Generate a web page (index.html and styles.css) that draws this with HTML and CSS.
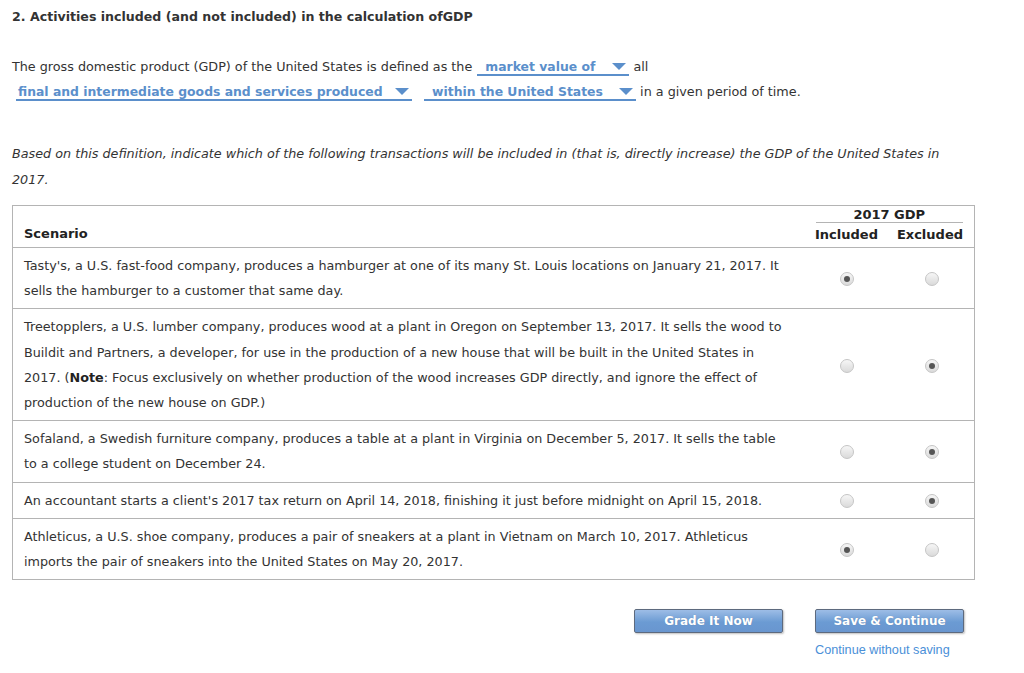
FILE: index.html
```html
<!DOCTYPE html>
<html>
<head>
<meta charset="utf-8">
<link rel="stylesheet" href="styles.css">
</head>
<body>
<div class="page">
  <h2 class="title">2. Activities included (and not included) in the calculation ofGDP</h2>

  <p class="def">The gross domestic product (GDP) of the United States is defined as the <span class="dd dd-1">market value of<span class="tri"></span></span> all<br><span class="dd dd-2">final and intermediate goods and services produced<span class="tri"></span></span> <span class="dd dd-3">within the United States<span class="tri"></span></span> in a given period of time.</p>

  <p class="instr">Based on this definition, indicate which of the following transactions will be included in (that is, directly increase) the GDP of the United States in 2017.</p>

  <table class="grid">
    <colgroup>
      <col class="c-sc">
      <col class="c-inc">
      <col class="c-exc">
    </colgroup>
    <thead>
      <tr>
        <th class="sc-h" rowspan="2">Scenario</th>
        <th class="grp" colspan="2"><span class="grp-label">2017 GDP</span></th>
      </tr>
      <tr>
        <th class="opt-h inc">Included</th>
        <th class="opt-h exc">Excluded</th>
      </tr>
    </thead>
    <tbody>
      <tr>
        <td class="sc">Tasty's, a U.S. fast-food company, produces a hamburger at one of its many St. Louis locations on January 21, 2017. It sells the hamburger to a customer that same day.</td>
        <td class="opt"><span class="radio on"></span></td>
        <td class="opt"><span class="radio"></span></td>
      </tr>
      <tr>
        <td class="sc">Treetopplers, a U.S. lumber company, produces wood at a plant in Oregon on September 13, 2017. It sells the wood to Buildit and Partners, a developer, for use in the production of a new house that will be built in the United States in 2017. (<b class="note">Note</b>: Focus exclusively on whether production of the wood increases GDP directly, and ignore the effect of production of the new house on GDP.)</td>
        <td class="opt"><span class="radio"></span></td>
        <td class="opt"><span class="radio on"></span></td>
      </tr>
      <tr>
        <td class="sc">Sofaland, a Swedish furniture company, produces a table at a plant in Virginia on December 5, 2017. It sells the table to a college student on December 24.</td>
        <td class="opt"><span class="radio"></span></td>
        <td class="opt"><span class="radio on"></span></td>
      </tr>
      <tr>
        <td class="sc">An accountant starts a client's 2017 tax return on April 14, 2018, finishing it just before midnight on April 15, 2018.</td>
        <td class="opt"><span class="radio"></span></td>
        <td class="opt"><span class="radio on"></span></td>
      </tr>
      <tr>
        <td class="sc">Athleticus, a U.S. shoe company, produces a pair of sneakers at a plant in Vietnam on March 10, 2017. Athleticus imports the pair of sneakers into the United States on May 20, 2017.</td>
        <td class="opt"><span class="radio on"></span></td>
        <td class="opt"><span class="radio"></span></td>
      </tr>
    </tbody>
  </table>

  <div class="actions">
    <button class="btn">Grade It Now</button>
    <div class="save-col">
      <button class="btn">Save &amp; Continue</button>
      <a class="skip" href="#">Continue without saving</a>
    </div>
  </div>
</div>
</body>
</html>
```

FILE: styles.css
```css
html, body {
  margin: 0;
  padding: 0;
  background: #fff;
}

body {
  font-family: "DejaVu Sans", Verdana, sans-serif;
  font-size: 12.75px;
  color: #333;
}

.page {
  padding: 9px 0 0 12px;
  width: 963px;
}

.title {
  margin: 0;
  font-size: 12.6px;
  line-height: 16px;
  font-weight: bold;
  color: #333;
}

.def {
  margin: 29px 0 0 0;
  line-height: 25px;
}

.dd {
  display: inline-block;
  position: relative;
  color: #5b8fcb;
  font-weight: bold;
  font-size: 12.4px;
  border-bottom: 2px solid #5b8fcb;
  line-height: 15px;
  padding: 0 0 0 8px;
  box-sizing: border-box;
  text-align: left;
  vertical-align: baseline;
}

.dd-1 { width: 152px; margin-left: 1px; }
.dd-2 { width: 396px; margin-left: 4px; padding-left: 2px; }
.dd-3 { width: 212px; margin-left: 8px; }

.tri {
  position: absolute;
  right: 3px;
  top: 4px;
  width: 0;
  height: 0;
  border-left: 7px solid transparent;
  border-right: 7px solid transparent;
  border-top: 7px solid #5b8fcb;
}

.instr {
  margin: 37px 0 0 0;
  font-style: italic;
  line-height: 26px;
}

.grid {
  margin-top: 12px;
  width: 962px;
  table-layout: fixed;
  border-collapse: collapse;
  border: 1px solid #b4b4b4;
}

.c-sc { width: 792px; }
.c-inc { width: 84px; }
.c-exc { width: 86px; }

.grid th {
  font-weight: bold;
  font-size: 13px;
  color: #222;
  padding: 0;
}

.sc-h {
  text-align: left;
  vertical-align: bottom;
  padding: 0 0 5px 11px !important;
  line-height: 16px;
  border-bottom: 1px solid #b4b4b4;
}

.grp {
  padding: 1px 11px 0 11px !important;
  line-height: 15px;
}

.grp-label {
  display: block;
  text-align: center;
  border-bottom: 1px solid #b4b4b4;
}

.opt-h {
  line-height: 16px;
  padding: 4px 0 4px 0 !important;
  border-bottom: 1px solid #b4b4b4;
}

.inc { text-align: center; }
.exc { text-align: right; padding-right: 11px !important; }

.grid td {
  border-top: 1px solid #b4b4b4;
}

.sc {
  padding: 5px 16px 5px 11px;
  line-height: 25.2px;
  color: #333;
}

.note { color: #222; }

.opt {
  text-align: center;
  vertical-align: middle;
  padding: 0;
}

.opt + .opt {
  padding-left: 2px;
}

.radio {
  display: inline-block;
  width: 14px;
  height: 14px;
  border-radius: 50%;
  border: 1px solid #c6c6c6;
  box-sizing: border-box;
  background: linear-gradient(#f6f6f6, #dadada);
  position: relative;
  vertical-align: middle;
}

.radio.on::after {
  content: "";
  position: absolute;
  left: 3px;
  top: 3px;
  width: 6px;
  height: 6px;
  border-radius: 50%;
  background: #555;
}

.actions {
  display: flex;
  justify-content: flex-end;
  gap: 32px;
  padding-right: 11px;
  margin-top: 29px;
}

.save-col {
  display: flex;
  flex-direction: column;
  align-items: flex-start;
}

.btn {
  width: 149px;
  height: 24px;
  border: 1px solid #5d6a7e;
  border-radius: 2px;
  background: linear-gradient(#9dbde6, #6b9bd3 55%, #6996cf);
  color: #fff;
  font-family: "DejaVu Sans", Verdana, sans-serif;
  font-weight: bold;
  font-size: 12px;
  box-shadow: 1px 1px 2px rgba(0,0,0,0.25);
  padding: 0;
  text-shadow: 0 0 1px rgba(0,0,0,0.2);
}

.skip {
  margin-top: 10px;
  font-family: "Liberation Sans", Arial, sans-serif;
  font-size: 12.7px;
  color: #4a8fd8;
  text-decoration: none;
}
```
